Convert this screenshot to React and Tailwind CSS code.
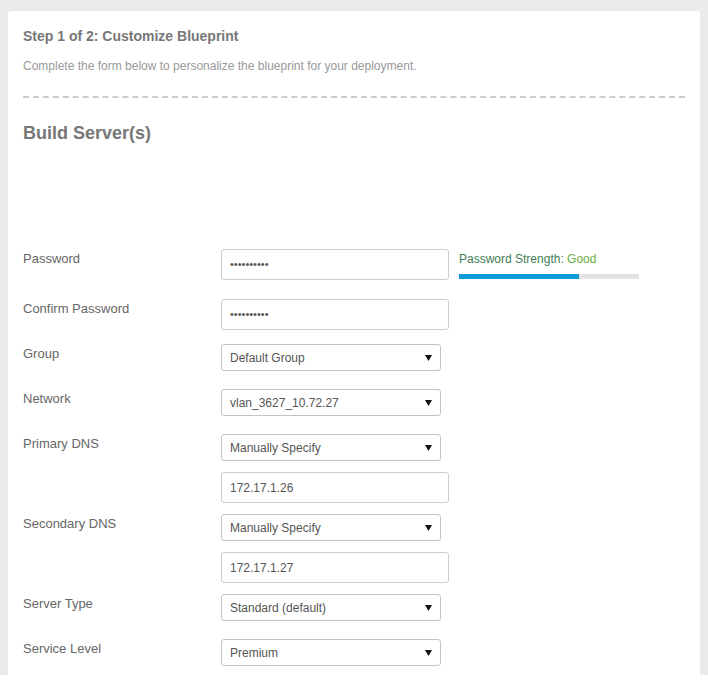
import React from 'react';

const Caret = () => (
  <svg width="7" height="6" viewBox="0 0 7 6" className="shrink-0">
    <path d="M0 0 H7 L3.5 6 Z" fill="#111" />
  </svg>
);

const SelectBox = ({ value }) => (
  <div className="flex h-[27px] w-[220px] items-center justify-between rounded-[3px] border border-[#c4c4c4] bg-white pl-[8px] pr-[8px] text-[12px] text-[#555]">
    <span>{value}</span>
    <Caret />
  </div>
);

const TextBox = ({ children, className = '' }) => (
  <div className={`flex h-[31px] w-[228px] items-center rounded-[3px] border border-[#ccc] bg-white px-[8px] text-[#555] ${className}`}>
    {children}
  </div>
);

const Row = ({ label, children, className = '' }) => (
  <div className={`flex ${className}`}>
    <div className="w-[198px] shrink-0 pt-[1px] text-[13px] leading-[18px] text-[#666]">{label}</div>
    <div className="flex flex-col">{children}</div>
  </div>
);

const Dots = () => (
  <TextBox className="text-[11px] text-[#333]">
    <span className="pb-[1px]">••••••••••</span>
  </TextBox>
);

const App = () => {
  return (
    <div className="bg-[#ebebeb] px-[8px] pt-[11px]" style={{ fontFamily: '"Liberation Sans", Arial, sans-serif' }}>
      <div className="rounded-t-[3px] bg-white px-[15px] pb-[9px] pt-[15px]">
        <h1 className="text-[14px] font-bold leading-[20px] text-[#777]">Step 1 of 2: Customize Blueprint</h1>
        <p className="mt-[11px] text-[12px] leading-[18px] text-[#999]">
          Complete the form below to personalize the blueprint for your deployment.
        </p>
        <div className="mt-[21px] border-t-2 border-dashed border-[#ccc]" />
        <h2 className="mt-[23px] text-[18px] font-bold leading-[24px] text-[#777]">Build Server(s)</h2>

        <div className="mt-[104px]">
          <Row label="Password" className="mb-[19px]">
            <div className="flex">
              <Dots />
              <div className="ml-[10px] w-[180px]">
                <div className="pt-[2px] text-[12px] leading-[16px] text-[#3f7d55]">
                  Password Strength: <span className="text-[#6cae45]">Good</span>
                </div>
                <div className="mt-[7px] h-[5px] w-[180px] bg-[#e3e3e3]">
                  <div className="h-full w-[120px] bg-[#0a9bd8]" />
                </div>
              </div>
            </div>
          </Row>
          <Row label="Confirm Password" className="mb-[14px]">
            <Dots />
          </Row>
          <Row label="Group" className="mb-[18px]">
            <SelectBox value="Default Group" />
          </Row>
          <Row label="Network" className="mb-[18px]">
            <SelectBox value="vlan_3627_10.72.27" />
          </Row>
          <Row label="Primary DNS" className="mb-[11px]">
            <SelectBox value="Manually Specify" />
            <TextBox className="mt-[11px] text-[12px]">
              <span className="pt-[1px]">172.17.1.26</span>
            </TextBox>
          </Row>
          <Row label="Secondary DNS" className="mb-[11px]">
            <SelectBox value="Manually Specify" />
            <TextBox className="mt-[11px] text-[12px]">
              <span className="pt-[1px]">172.17.1.27</span>
            </TextBox>
          </Row>
          <Row label="Server Type" className="mb-[18px]">
            <SelectBox value="Standard (default)" />
          </Row>
          <Row label="Service Level">
            <SelectBox value="Premium" />
          </Row>
        </div>
      </div>
    </div>
  );
};

export default App;
